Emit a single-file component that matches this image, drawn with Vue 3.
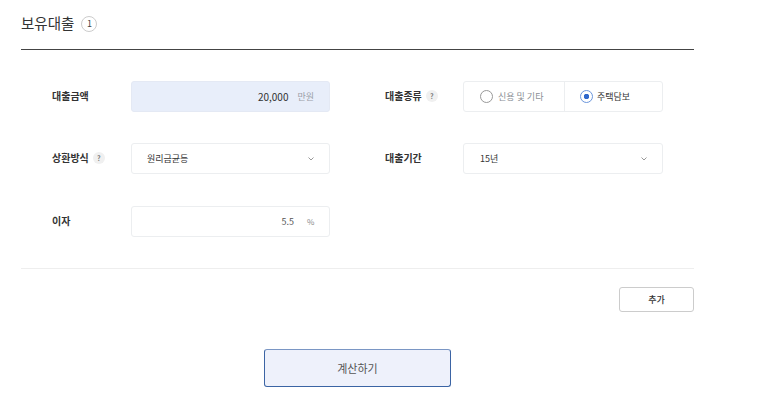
<script setup>
const chevron = 'M.5 .5l2.5 2.5L5.5 .5'
</script>

<template>
  <div class="page">
    <header class="head">
      <h2 class="title">보유대출</h2>
      <span class="count">1</span>
    </header>
    <div class="form">
      <div class="row">
        <div class="cell">
          <span class="label">대출금액</span>
          <div class="field filled">
            <span class="value">20,000</span>
            <span class="unit">만원</span>
          </div>
        </div>
        <div class="cell right">
          <span class="label">대출종류<i class="help">?</i></span>
          <div class="field radios">
            <div class="radio"><span class="dot"></span><span class="off">신용 및 기타</span></div>
            <div class="radio on"><span class="dot"></span><span>주택담보</span></div>
          </div>
        </div>
      </div>
      <div class="row">
        <div class="cell">
          <span class="label">상환방식<i class="help">?</i></span>
          <div class="field select">
            <span>원리금균등</span>
            <svg width="6" height="4" viewBox="0 0 6 4"><path :d="chevron" /></svg>
          </div>
        </div>
        <div class="cell right">
          <span class="label">대출기간</span>
          <div class="field select">
            <span>15년</span>
            <svg width="6" height="4" viewBox="0 0 6 4"><path :d="chevron" /></svg>
          </div>
        </div>
      </div>
      <div class="row">
        <div class="cell">
          <span class="label">이자</span>
          <div class="field">
            <span class="value small">5.5</span>
            <span class="unit pct">%</span>
          </div>
        </div>
      </div>
    </div>
    <div class="actions">
      <button class="add" type="button">추가</button>
    </div>
    <div class="submit">
      <button class="calc" type="button">계산하기</button>
    </div>
  </div>
</template>

<style>
body { background: #fff; }
</style>

<style scoped>
.page {
  width: 673px;
  margin-left: 21px;
  font-family: "Noto Sans CJK KR", "Noto Sans", sans-serif;
  color: #333;
}
.head {
  height: 37px;
  padding-top: 12px;
  display: flex;
  align-items: flex-start;
  gap: 7px;
  border-bottom: 1px solid #444;
}
.title {
  margin: 0;
  font-size: 14.5px;
  line-height: 21px;
  font-weight: 400;
  color: #333;
}
.count {
  width: 14px;
  height: 14px;
  margin-top: 4px;
  border: 1px solid #ccc;
  border-radius: 50%;
  font-size: 9px;
  line-height: 14px;
  text-align: center;
  color: #444;
}
.form {
  padding: 31px 0;
  display: flex;
  flex-direction: column;
  gap: 31.4px;
  border-bottom: 1px solid #eee;
}
.row {
  display: flex;
  height: 31px;
}
.cell {
  display: flex;
  align-items: center;
  width: 364px;
  padding-left: 31px;
  box-sizing: border-box;
}
.cell.right {
  padding-left: 0;
  width: auto;
}
.cell.right .label { width: 78px; }
.cell.right .field { width: 200px; }
.cell.right .select { padding-left: 16px; }
.label {
  width: 79px;
  flex: none;
  font-size: 10px;
  font-weight: 700;
  color: #333;
  display: flex;
  align-items: center;
  margin-top: -2px;
}
.help {
  width: 12px;
  height: 12px;
  margin-left: 4px;
  border-radius: 50%;
  background: #f0f0f0;
  color: #777;
  font-size: 7px;
  font-style: normal;
  font-weight: 700;
  line-height: 12px;
  text-align: center;
}
.field {
  width: 199px;
  height: 31px;
  box-sizing: border-box;
  border: 1px solid #eceef0;
  border-radius: 3px;
  background: #fff;
  font-size: 9px;
  display: flex;
  align-items: center;
  justify-content: flex-end;
  padding: 0 15px;
}
.field.filled {
  background: #e8eefa;
  border-color: #e4e9f4;
}
.value { color: #333; font-size: 10px; }
.value.small { font-size: 9px; color: #555; }
.unit { margin-left: 9px; color: #9aa0a8; white-space: nowrap; }
.unit.pct { margin-left: 13px; width: 7px; font-size: 8px; color: #888; }
.select {
  justify-content: space-between;
  color: #333;
}
.select svg { fill: none; stroke: #999; stroke-width: 1; }
.cell.right .radios {
  padding: 0;
  justify-content: flex-start;
}
.radio {
  flex: 0 0 100px;
  height: 100%;
  display: flex;
  align-items: center;
  gap: 5px;
  padding-left: 16px;
  box-sizing: border-box;
  color: #333;
  white-space: nowrap;
}
.radio + .radio {
  flex: 1;
  gap: 4px;
  padding-left: 15px;
  border-left: 1px solid #eceef0;
}
.off { color: #8a8f96; }
.dot {
  width: 13px;
  height: 13px;
  box-sizing: border-box;
  border: 1px solid #999;
  border-radius: 50%;
  flex: none;
}
.on .dot {
  border-color: #6b96dc;
  background: radial-gradient(circle, #2f68cc 0 2.5px, #fff 3px);
}
.actions {
  display: flex;
  justify-content: flex-end;
  padding-top: 18.5px;
}
.add {
  width: 75px;
  height: 25px;
  padding: 0;
  border: 1px solid #ccc;
  border-radius: 3px;
  background: #fff;
  font: 500 9px "Noto Sans CJK KR", sans-serif;
  color: #333;
}
.submit {
  display: flex;
  padding: 37px 0 0 243px;
}
.calc {
  width: 187px;
  height: 38px;
  padding: 0;
  border: 1px solid #3b64a4;
  border-top-color: #7a96c4;
  border-radius: 3px;
  background: #eef1fb;
  font: 400 11px "Noto Sans CJK KR", sans-serif;
  color: #555;
}
</style>
